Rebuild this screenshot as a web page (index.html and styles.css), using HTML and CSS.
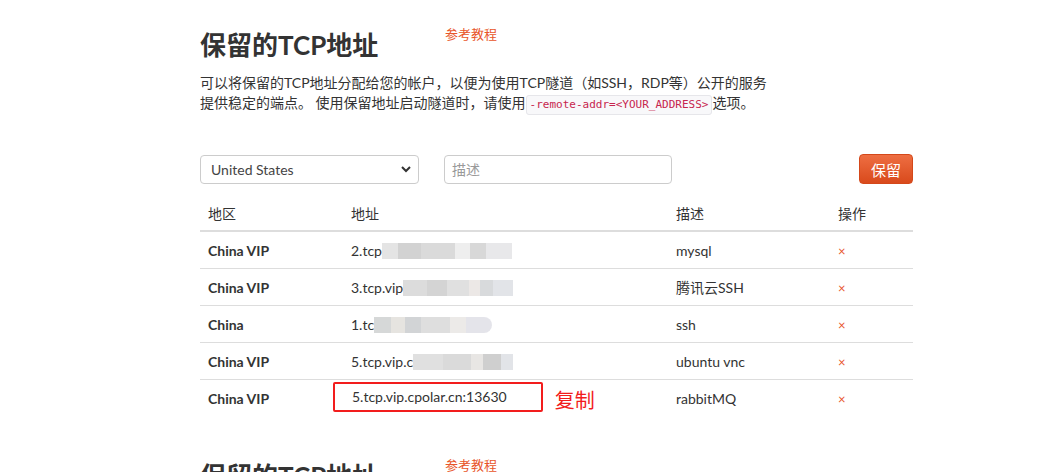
FILE: index.html
```html
<!DOCTYPE html>
<html lang="zh-CN">
<head>
    <meta charset="UTF-8">
    <title>保留的TCP地址</title>
    <link rel="stylesheet" href="styles.css">
</head>
<body>
    <div class="page">
        <section class="block">
            <div class="title-row">
                <h2>保留的TCP地址</h2>
                <a class="doc-link" href="#">参考教程</a>
            </div>
            <p class="intro">可以将保留的TCP地址分配给您的帐户，以便为使用TCP隧道（如SSH，RDP等）公开的服务<br>提供稳定的端点。 使用保留地址启动隧道时，请使用<code>-remote-addr=&lt;YOUR_ADDRESS&gt;</code>选项。</p>

            <div class="form-row">
                <div class="select-box">
                    <span>United States</span>
                    <svg width="12" height="8" viewBox="0 0 12 8"><path d="M2 2l4 4 4-4" fill="none" stroke="#333" stroke-width="2"/></svg>
                </div>
                <div class="input-box">描述</div>
                <button class="btn-reserve">保留</button>
            </div>

            <table class="addr-table">
                <thead>
                    <tr><th class="c-region">地区</th><th class="c-addr">地址</th><th class="c-desc">描述</th><th class="c-op">操作</th></tr>
                </thead>
                <tbody>
                    <tr>
                        <td class="region">China VIP</td>
                        <td>2.tcp<span class="blur b1"></span></td>
                        <td>mysql</td>
                        <td><span class="del">×</span></td>
                    </tr>
                    <tr>
                        <td class="region">China VIP</td>
                        <td>3.tcp.vip<span class="blur b2"></span></td>
                        <td>腾讯云SSH</td>
                        <td><span class="del">×</span></td>
                    </tr>
                    <tr>
                        <td class="region">China</td>
                        <td>1.tc<span class="blur b3"></span></td>
                        <td>ssh</td>
                        <td><span class="del">×</span></td>
                    </tr>
                    <tr>
                        <td class="region">China VIP</td>
                        <td>5.tcp.vip.c<span class="blur b4"></span></td>
                        <td>ubuntu vnc</td>
                        <td><span class="del">×</span></td>
                    </tr>
                    <tr>
                        <td class="region">China VIP</td>
                        <td class="copy-cell"><span class="mark">5.tcp.vip.cpolar.cn:13630</span><span class="copy-note">复制</span></td>
                        <td>rabbitMQ</td>
                        <td><span class="del">×</span></td>
                    </tr>
                </tbody>
            </table>
        </section>

        <section class="block next">
            <div class="title-row">
                <h2>保留的TCP地址</h2>
                <a class="doc-link" href="#">参考教程</a>
            </div>
        </section>
    </div>
</body>
</html>
```

FILE: styles.css
```css
body {
    margin: 0;
    background: #ffffff;
    color: #333333;
    font-family: 'Lato', 'Noto Sans CJK SC', sans-serif;
    font-size: 14px;
    overflow: hidden;
}

.page {
    width: 713px;
    margin-left: 200px;
}

.title-row {
    display: flex;
    align-items: flex-start;
    padding-top: 27px;
}

.title-row h2 {
    margin: 0;
    width: 245px;
    font-size: 26px;
    line-height: 36px;
    font-weight: bold;
    color: #333333;
}

.doc-link {
    margin-top: -2px;
    font-size: 13px;
    line-height: 18px;
    color: #e8552a;
    text-decoration: none;
}

.intro {
    margin: 10px 0 0;
    line-height: 20px;
    color: #333333;
}

.intro code {
    font-family: 'DejaVu Sans Mono', monospace;
    font-size: 11px;
    color: #c7254e;
    background: #f8f8fa;
    border: 1px solid #e6e6ea;
    border-radius: 3px;
    padding: 2px 3px 3px;
}

.form-row {
    display: flex;
    align-items: center;
    margin-top: 39px;
    height: 30px;
}

.select-box {
    box-sizing: border-box;
    width: 219px;
    height: 29px;
    border: 1px solid #cccccc;
    border-radius: 4px;
    display: flex;
    align-items: center;
    justify-content: space-between;
    padding: 0 6px 0 10px;
    color: #444444;
}

.input-box {
    box-sizing: border-box;
    width: 228px;
    height: 29px;
    margin-left: 25px;
    border: 1px solid #cccccc;
    border-radius: 4px;
    padding: 0 7px;
    line-height: 27px;
    color: #999999;
}

.btn-reserve {
    margin-left: auto;
    width: 54px;
    height: 30px;
    border: 1px solid #d4481a;
    border-radius: 4px;
    background: linear-gradient(#ee6e42, #d94a1c);
    color: #ffffff;
    font-family: 'Noto Sans CJK SC', sans-serif;
    font-size: 15px;
    padding: 0;
}

.addr-table {
    width: 100%;
    border-collapse: collapse;
    margin-top: 12px;
}

.addr-table th {
    text-align: left;
    font-weight: normal;
    color: #333333;
    height: 34px;
    padding: 0 8px;
    border-bottom: 2px solid #dddddd;
}

.addr-table td {
    height: 36px;
    padding: 0 8px;
    border-bottom: 1px solid #dddddd;
    vertical-align: middle;
}

.addr-table tbody tr:last-child td {
    border-bottom: none;
}

.c-region { width: 127px; }
.c-addr { width: 309px; }
.c-desc { width: 146px; }

.region {
    font-weight: bold;
}

.blur {
    display: inline-block;
    height: 16px;
    vertical-align: -3px;
}

.b1 {
    width: 130px;
    background: linear-gradient(90deg, #e4e4e4 0 12%, #d2d2d2 12% 30%, #dadada 30% 56%, #eeeeee 56% 68%, #d8d8d8 68% 80%, #e8e8ea 80%);
}

.b2 {
    width: 110px;
    background: linear-gradient(90deg, #dcdcdc 0 22%, #d4d4d4 22% 40%, #e0e0e0 40% 60%, #ece8e6 60% 70%, #d8dadc 70% 82%, #e2e4e8 82%);
}

.b3 {
    width: 118px;
    background: linear-gradient(90deg, #d6d8d8 0 14%, #e6e4e0 14% 26%, #d2d4d6 26% 40%, #dedede 40% 64%, #eceae8 64% 78%, #e4e4ea 78%);
    border-radius: 0 8px 8px 0;
}

.b4 {
    width: 100px;
    background: linear-gradient(90deg, #e0e0e0 0 30%, #dadada 30% 58%, #e8e6e4 58% 70%, #cfcfcf 70% 88%, #e2e4e8 88%);
}

.mark {
    display: inline-block;
    margin-left: -18px;
    padding: 3px 34px 3px 17px;
    border: 2px solid #f21d1d;
    border-radius: 2px;
    line-height: 20px;
}

.copy-note {
    margin-left: 12px;
    font-family: 'Noto Sans CJK SC', sans-serif;
    font-size: 20px;
    color: #f21d1d;
    vertical-align: -6px;
}

.del {
    color: #e8552a;
    font-size: 13px;
}

.block.next .title-row {
    padding-top: 42px;
}
```
